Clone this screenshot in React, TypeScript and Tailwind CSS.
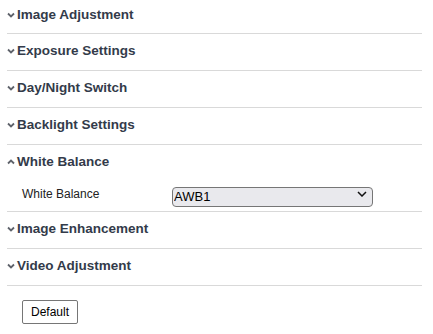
import React from "react";

const Chevron = ({ up = false }: { up?: boolean }) => (
  <svg width="8" height="6" viewBox="0 0 8 6" className="shrink-0" style={{ transform: up ? "rotate(180deg)" : undefined }}>
    <polyline points="1,1.5 4,4.5 7,1.5" fill="none" stroke="#5f636b" strokeWidth="1.8" />
  </svg>
);

const Header = ({ title, up = false, first = false }: { title: string; up?: boolean; first?: boolean }) => (
  <div className={`flex items-center gap-[2px] ${first ? "pt-[7px]" : "pt-[9px]"} text-[13.5px] font-bold leading-[16px] text-[#333b4a]`}>
    <Chevron up={up} />
    <span>{title}</span>
  </div>
);

const Section = ({ title, first = false }: { title: string; first?: boolean }) => (
  <div className={`border-b border-[#d9d9d9] ${first ? "h-[34px]" : "h-[37px]"}`}>
    <Header title={title} first={first} />
  </div>
);

export default function App() {
  return (
    <div className="ml-[7px] w-[415px] bg-white" style={{ fontFamily: '"Liberation Sans", Arial, sans-serif' }}>
      <Section title="Image Adjustment" first />
      <Section title="Exposure Settings" />
      <Section title="Day/Night Switch" />
      <Section title="Backlight Settings" />
      <div className="border-b border-[#d9d9d9]">
        <div className="h-[25px]">
          <Header title="White Balance" up />
        </div>
        <div className="flex items-center pt-[14px] pb-[7px] pl-[15px]">
          <span className="w-[150px] text-[12px] leading-[14px] text-[#222]">White Balance</span>
          <div className="relative w-[201px] h-[20px]">
            <select
              defaultValue="AWB1"
              className="appearance-none w-full h-full rounded-[4px] border border-[#767676] bg-[#e9e9ed] pl-[1px] text-[13px] leading-[16px] text-black outline-none"
              style={{ fontFamily: '"Liberation Sans", Arial, sans-serif' }}
            >
              <option>AWB1</option>
              <option>AWB2</option>
              <option>Manual</option>
            </select>
            <svg className="pointer-events-none absolute right-[6px] top-[7px]" width="10" height="6" viewBox="0 0 10 6">
              <polyline points="1,1 5,5 9,1" fill="none" stroke="#111" strokeWidth="1.5" />
            </svg>
          </div>
        </div>
      </div>
      <Section title="Image Enhancement" />
      <Section title="Video Adjustment" />
      <div className="pt-[13px] pl-[15px]">
        <button className="h-[24px] w-[56px] border border-[#767676] bg-white text-[12px] text-black rounded-[2px]">
          Default
        </button>
      </div>
    </div>
  );
}
